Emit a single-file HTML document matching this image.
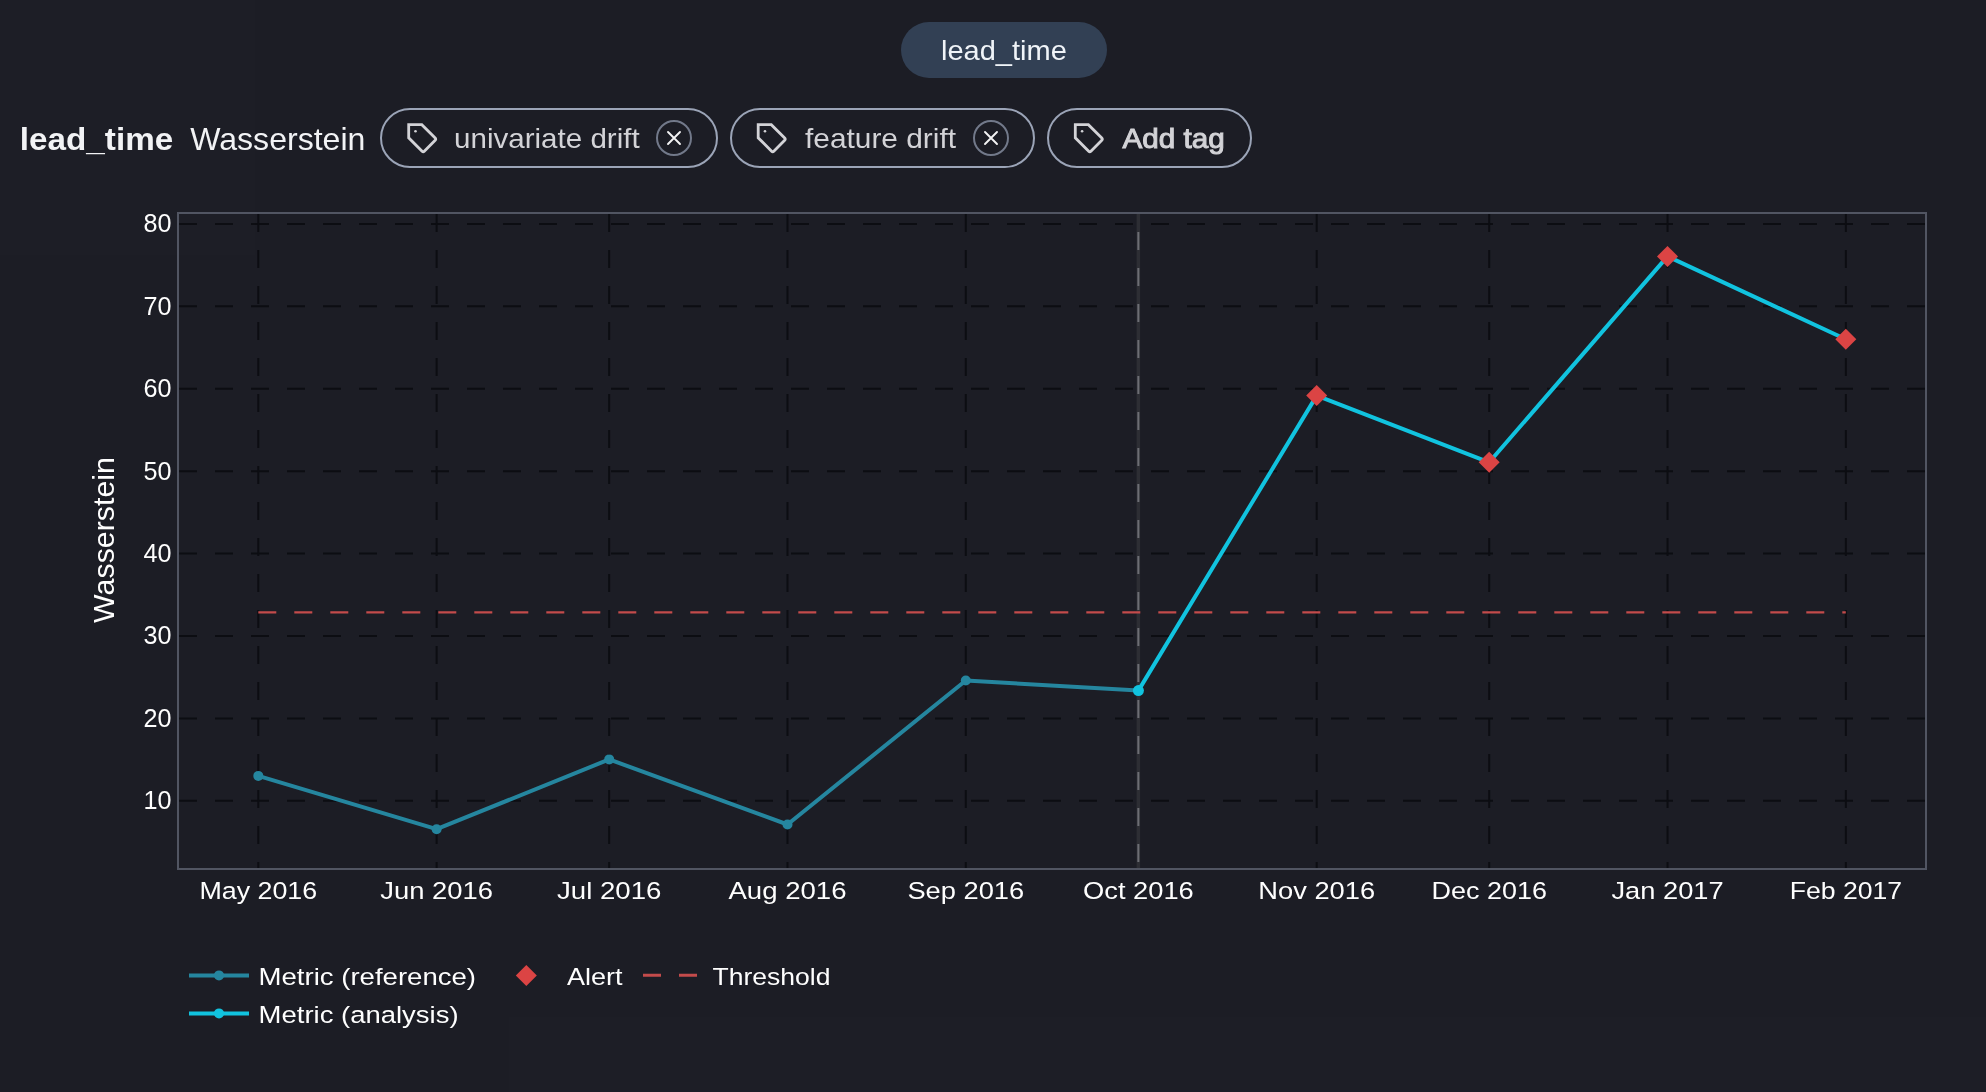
<!DOCTYPE html>
<html><head><meta charset="utf-8"><style>
html,body{margin:0;padding:0;background:#1d1e26;width:1986px;height:1092px;overflow:hidden}
svg{display:block;will-change:transform;opacity:0.999}
text{font-family:"Liberation Sans",sans-serif}
.tk{font-size:24px;fill:#ffffff}
.tt{font-size:30px;fill:#ffffff}
.hd{font-size:28px;fill:#f1f5f9}
.hb{font-size:32px;font-weight:bold;fill:#f3f4f6}
.hr{font-size:32px;fill:#f3f4f6}
.tg{font-size:28px;fill:#d4d4d8}
.ta{font-size:28px;fill:#d4d4d8;stroke:#d4d4d8;stroke-width:1;paint-order:stroke}
</style></head><body>
<svg width="1986" height="1092" viewBox="0 0 1986 1092">
<rect width="1986" height="1092" fill="#1d1e26"/>
<rect x="901" y="22" width="206" height="56" rx="28" fill="#334155"/>
<text x="941" y="60" class="hd" textLength="125.8" lengthAdjust="spacingAndGlyphs">lead_time</text>
<text x="19.8" y="150" class="hb" textLength="153.4" lengthAdjust="spacingAndGlyphs">lead_time</text>
<text x="190.2" y="150" class="hr" textLength="175.2" lengthAdjust="spacingAndGlyphs">Wasserstein</text>
<rect x="381" y="109" width="336" height="58" rx="29" fill="none" stroke="#9ca5b8" stroke-width="2"/>
<g transform="translate(408.7,124.7)" fill="none" stroke="#d4d4d8" stroke-width="2.8" stroke-linejoin="miter"><path d="M0 0H13.1L26.5 13.4Q27.6 14.5 26.5 15.6L15.6 26.5Q14.5 27.6 13.4 26.5L0 13.1Z"/><circle cx="6.8" cy="6.6" r="1.3" fill="#d4d4d8" stroke="none"/></g>
<text x="454" y="148" class="tg" textLength="185.7" lengthAdjust="spacingAndGlyphs">univariate drift</text>
<circle cx="674" cy="138" r="17" fill="none" stroke="#737a8b" stroke-width="2"/><path d="M668 132 L680 144 M680 132 L668 144" stroke="#f4f4f5" stroke-width="1.9" stroke-linecap="round"/>
<rect x="731" y="109" width="303" height="58" rx="29" fill="none" stroke="#9ca5b8" stroke-width="2"/>
<g transform="translate(758.2,124.7)" fill="none" stroke="#d4d4d8" stroke-width="2.8" stroke-linejoin="miter"><path d="M0 0H13.1L26.5 13.4Q27.6 14.5 26.5 15.6L15.6 26.5Q14.5 27.6 13.4 26.5L0 13.1Z"/><circle cx="6.8" cy="6.6" r="1.3" fill="#d4d4d8" stroke="none"/></g>
<text x="805" y="148" class="tg" textLength="151" lengthAdjust="spacingAndGlyphs">feature drift</text>
<circle cx="991" cy="138" r="17" fill="none" stroke="#737a8b" stroke-width="2"/><path d="M985 132 L997 144 M997 132 L985 144" stroke="#f4f4f5" stroke-width="1.9" stroke-linecap="round"/>
<rect x="1048" y="109" width="203" height="58" rx="29" fill="none" stroke="#9ca5b8" stroke-width="2"/>
<g transform="translate(1075.3,124.7)" fill="none" stroke="#d4d4d8" stroke-width="2.8" stroke-linejoin="miter"><path d="M0 0H13.1L26.5 13.4Q27.6 14.5 26.5 15.6L15.6 26.5Q14.5 27.6 13.4 26.5L0 13.1Z"/><circle cx="6.8" cy="6.6" r="1.3" fill="#d4d4d8" stroke="none"/></g>
<text x="1122.5" y="147.7" class="ta" textLength="102.2" lengthAdjust="spacingAndGlyphs">Add tag</text>
<line x1="179" y1="800.79" x2="1926" y2="800.79" stroke="#0d0e13" stroke-width="2" stroke-dasharray="18 18"/>
<line x1="179" y1="718.38" x2="1926" y2="718.38" stroke="#0d0e13" stroke-width="2" stroke-dasharray="18 18"/>
<line x1="179" y1="635.97" x2="1926" y2="635.97" stroke="#0d0e13" stroke-width="2" stroke-dasharray="18 18"/>
<line x1="179" y1="553.56" x2="1926" y2="553.56" stroke="#0d0e13" stroke-width="2" stroke-dasharray="18 18"/>
<line x1="179" y1="471.15" x2="1926" y2="471.15" stroke="#0d0e13" stroke-width="2" stroke-dasharray="18 18"/>
<line x1="179" y1="388.74" x2="1926" y2="388.74" stroke="#0d0e13" stroke-width="2" stroke-dasharray="18 18"/>
<line x1="179" y1="306.33" x2="1926" y2="306.33" stroke="#0d0e13" stroke-width="2" stroke-dasharray="18 18"/>
<line x1="179" y1="223.92" x2="1926" y2="223.92" stroke="#0d0e13" stroke-width="2" stroke-dasharray="18 18"/>
<line x1="258.30" y1="214" x2="258.30" y2="869" stroke="#0d0e13" stroke-width="2" stroke-dasharray="18 18"/>
<line x1="436.61" y1="214" x2="436.61" y2="869" stroke="#0d0e13" stroke-width="2" stroke-dasharray="18 18"/>
<line x1="609.17" y1="214" x2="609.17" y2="869" stroke="#0d0e13" stroke-width="2" stroke-dasharray="18 18"/>
<line x1="787.48" y1="214" x2="787.48" y2="869" stroke="#0d0e13" stroke-width="2" stroke-dasharray="18 18"/>
<line x1="965.80" y1="214" x2="965.80" y2="869" stroke="#0d0e13" stroke-width="2" stroke-dasharray="18 18"/>
<line x1="1316.67" y1="214" x2="1316.67" y2="869" stroke="#0d0e13" stroke-width="2" stroke-dasharray="18 18"/>
<line x1="1489.23" y1="214" x2="1489.23" y2="869" stroke="#0d0e13" stroke-width="2" stroke-dasharray="18 18"/>
<line x1="1667.54" y1="214" x2="1667.54" y2="869" stroke="#0d0e13" stroke-width="2" stroke-dasharray="18 18"/>
<line x1="1845.85" y1="214" x2="1845.85" y2="869" stroke="#0d0e13" stroke-width="2" stroke-dasharray="18 18"/>
<line x1="1138.36" y1="214" x2="1138.36" y2="869" stroke="#2e2f35" stroke-width="3.5"/>
<line x1="1138.36" y1="214" x2="1138.36" y2="869" stroke="#6e6f75" stroke-width="2" stroke-dasharray="0 18 18 0"/>
<rect x="178" y="213" width="1748" height="656" fill="none" stroke="#525663" stroke-width="2"/>
<line x1="258.3" y1="612.4" x2="1845.8" y2="612.4" stroke="#c44c4c" stroke-width="2.4" stroke-dasharray="18 18"/>
<polyline points="258.3,775.9 436.6,829.2 609.2,759.4 787.5,824.5 965.8,680.5 1138.4,690.6" fill="none" stroke="#2687a0" stroke-width="4" stroke-linejoin="round"/>
<circle cx="258.3" cy="775.9" r="5" fill="#2687a0"/>
<circle cx="436.6" cy="829.2" r="5" fill="#2687a0"/>
<circle cx="609.2" cy="759.4" r="5" fill="#2687a0"/>
<circle cx="787.5" cy="824.5" r="5" fill="#2687a0"/>
<circle cx="965.8" cy="680.5" r="5" fill="#2687a0"/>
<polyline points="1138.4,690.6 1316.7,395.6 1489.2,462.3 1667.5,256.4 1845.8,339.3" fill="none" stroke="#12c4e0" stroke-width="4" stroke-linejoin="round"/>
<circle cx="1138.4" cy="690.6" r="5.5" fill="#12c4e0"/>
<path d="M1316.7 385.1 L1327.2 395.6 L1316.7 406.1 L1306.2 395.6 Z" fill="#dc4545"/>
<path d="M1489.2 451.8 L1499.7 462.3 L1489.2 472.8 L1478.7 462.3 Z" fill="#dc4545"/>
<path d="M1667.5 245.89999999999998 L1678.0 256.4 L1667.5 266.9 L1657.0 256.4 Z" fill="#dc4545"/>
<path d="M1845.8 328.8 L1856.3 339.3 L1845.8 349.8 L1835.3 339.3 Z" fill="#dc4545"/>
<text x="171.6" y="809.1" text-anchor="end" class="tk" style="font-size:25px" textLength="28" lengthAdjust="spacingAndGlyphs">10</text>
<text x="171.6" y="726.7" text-anchor="end" class="tk" style="font-size:25px" textLength="28" lengthAdjust="spacingAndGlyphs">20</text>
<text x="171.6" y="644.3" text-anchor="end" class="tk" style="font-size:25px" textLength="28" lengthAdjust="spacingAndGlyphs">30</text>
<text x="171.6" y="561.9" text-anchor="end" class="tk" style="font-size:25px" textLength="28" lengthAdjust="spacingAndGlyphs">40</text>
<text x="171.6" y="479.5" text-anchor="end" class="tk" style="font-size:25px" textLength="28" lengthAdjust="spacingAndGlyphs">50</text>
<text x="171.6" y="397.0" text-anchor="end" class="tk" style="font-size:25px" textLength="28" lengthAdjust="spacingAndGlyphs">60</text>
<text x="171.6" y="314.6" text-anchor="end" class="tk" style="font-size:25px" textLength="28" lengthAdjust="spacingAndGlyphs">70</text>
<text x="171.6" y="232.2" text-anchor="end" class="tk" style="font-size:25px" textLength="28" lengthAdjust="spacingAndGlyphs">80</text>
<text x="199.4" y="899" class="tk" style="font-size:24.5px" textLength="117.8" lengthAdjust="spacingAndGlyphs">May 2016</text>
<text x="380.2" y="899" class="tk" style="font-size:24.5px" textLength="112.8" lengthAdjust="spacingAndGlyphs">Jun 2016</text>
<text x="557.0" y="899" class="tk" style="font-size:24.5px" textLength="104.4" lengthAdjust="spacingAndGlyphs">Jul 2016</text>
<text x="728.4" y="899" class="tk" style="font-size:24.5px" textLength="118.1" lengthAdjust="spacingAndGlyphs">Aug 2016</text>
<text x="907.4" y="899" class="tk" style="font-size:24.5px" textLength="116.8" lengthAdjust="spacingAndGlyphs">Sep 2016</text>
<text x="1083.0" y="899" class="tk" style="font-size:24.5px" textLength="110.8" lengthAdjust="spacingAndGlyphs">Oct 2016</text>
<text x="1258.3" y="899" class="tk" style="font-size:24.5px" textLength="116.8" lengthAdjust="spacingAndGlyphs">Nov 2016</text>
<text x="1431.6" y="899" class="tk" style="font-size:24.5px" textLength="115.3" lengthAdjust="spacingAndGlyphs">Dec 2016</text>
<text x="1611.5" y="899" class="tk" style="font-size:24.5px" textLength="112.1" lengthAdjust="spacingAndGlyphs">Jan 2017</text>
<text x="1789.7" y="899" class="tk" style="font-size:24.5px" textLength="112.4" lengthAdjust="spacingAndGlyphs">Feb 2017</text>
<text transform="translate(113.5,540) rotate(-90)" x="-83" y="0" class="tt" textLength="166" lengthAdjust="spacingAndGlyphs">Wasserstein</text>
<line x1="189" y1="975.4" x2="249" y2="975.4" stroke="#2687a0" stroke-width="4"/>
<circle cx="219" cy="975.4" r="5" fill="#2687a0"/>
<text x="258.6" y="985" class="tk" style="font-size:24.5px" textLength="217.4" lengthAdjust="spacingAndGlyphs">Metric (reference)</text>
<line x1="189" y1="1013.4" x2="249" y2="1013.4" stroke="#12c4e0" stroke-width="4"/>
<circle cx="219" cy="1013.4" r="5" fill="#12c4e0"/>
<text x="258.6" y="1023.3" class="tk" style="font-size:24.5px" textLength="200.0" lengthAdjust="spacingAndGlyphs">Metric (analysis)</text>
<path d="M526.3 965.0 L536.8 975.5 L526.3 986.0 L515.8 975.5 Z" fill="#dc4545"/>
<text x="567" y="985.1" class="tk" style="font-size:24.5px" textLength="55.6" lengthAdjust="spacingAndGlyphs">Alert</text>
<line x1="643" y1="975.3" x2="697" y2="975.3" stroke="#c44c4c" stroke-width="3" stroke-dasharray="18 18"/>
<text x="712.5" y="985.1" class="tk" style="font-size:24.5px" textLength="118" lengthAdjust="spacingAndGlyphs">Threshold</text>
</svg>
</body></html>
